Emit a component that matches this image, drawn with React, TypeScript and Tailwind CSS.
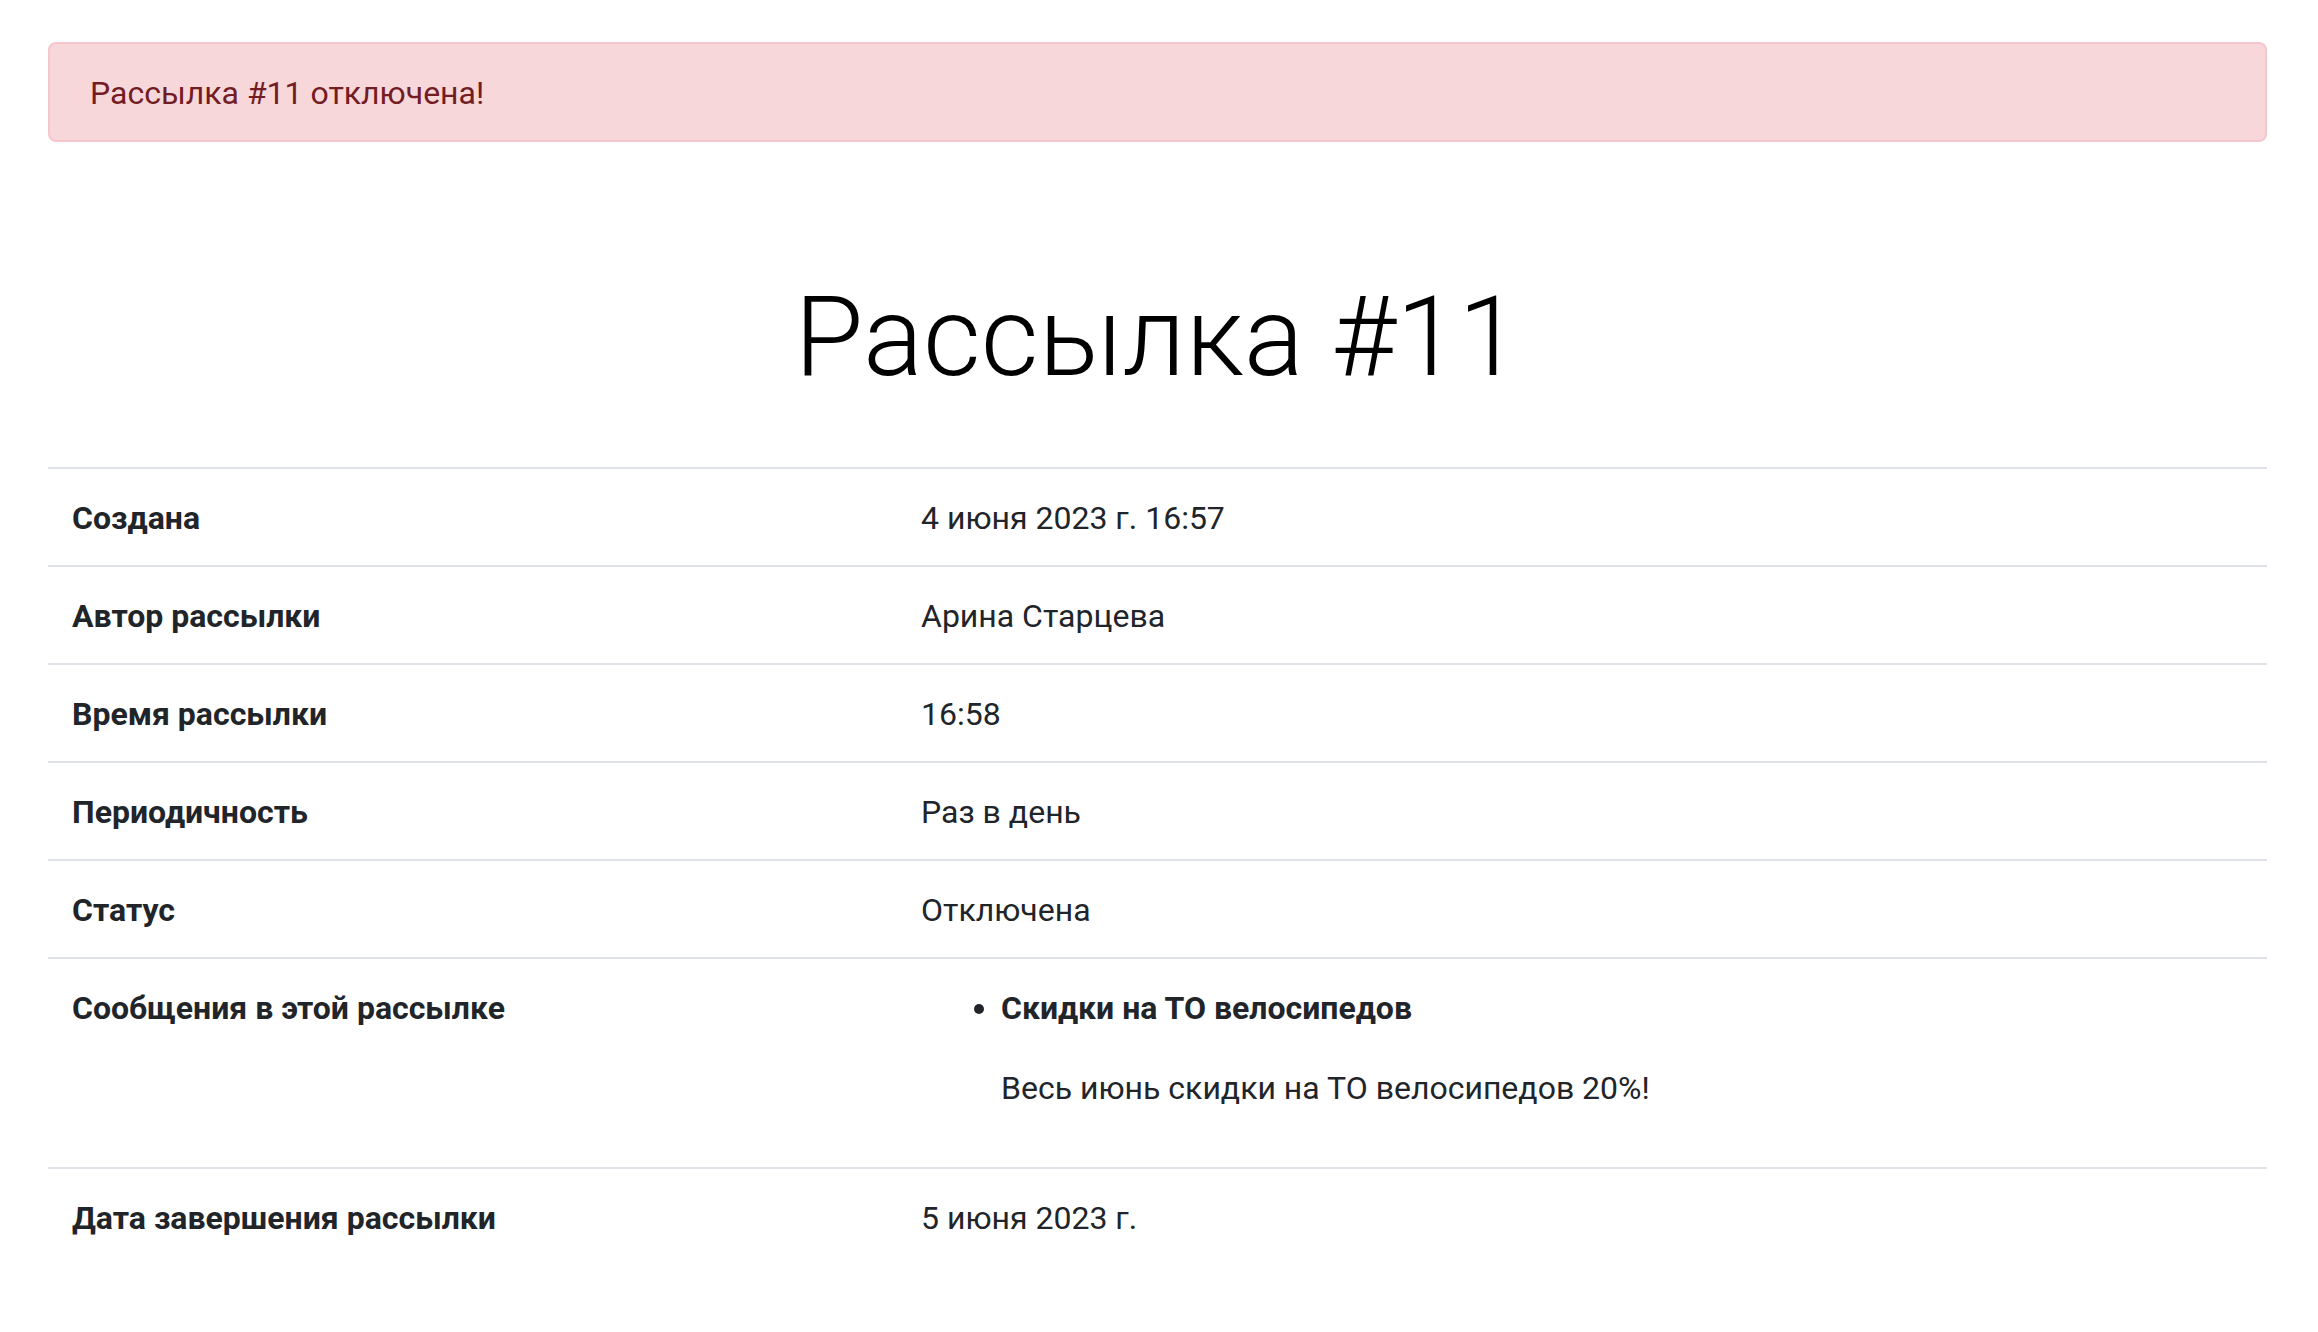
import React from "react";

const rows: { label: string; value: string }[] = [
  { label: "Создана", value: "4 июня 2023 г. 16:57" },
  { label: "Автор рассылки", value: "Арина Старцева" },
  { label: "Время рассылки", value: "16:58" },
  { label: "Периодичность", value: "Раз в день" },
  { label: "Статус", value: "Отключена" },
];

export default function App() {
  return (
    <div
      className="min-h-[1332px] bg-white text-[#212529] pl-[48px] pr-[51px] pt-[42px]"
      style={{ fontFamily: "Roboto, 'Noto Sans', sans-serif" }}
    >
      <div className="border-2 border-[#f5c6cb] bg-[#f8d7da] text-[#721c24] rounded-[8px] px-[40px] pt-[25px] pb-[23px] text-[32px] leading-[48px]">
        Рассылка #11 отключена!
      </div>

      <h1 className="mt-[128px] mb-[63px] text-center text-[112px] leading-[134px] font-light text-black">
        Рассылка #11
      </h1>

      <table className="w-full border-collapse text-[32px] leading-[48px]">
        <tbody>
          {rows.map((r) => (
            <tr key={r.label}>
              <th className="w-[849px] border-t-2 border-[#dee2e6] px-[24px] pt-[25px] pb-[23px] text-left font-bold align-top">
                {r.label}
              </th>
              <td className="border-t-2 border-[#dee2e6] px-[24px] pt-[25px] pb-[23px] align-top">{r.value}</td>
            </tr>
          ))}
          <tr>
            <th className="w-[849px] border-t-2 border-[#dee2e6] px-[24px] pt-[25px] pb-[23px] text-left font-bold align-top">
              Сообщения в этой рассылке
            </th>
            <td className="border-t-2 border-[#dee2e6] px-[24px] pt-[25px] pb-[23px] align-top">
              <ul className="list-disc pl-[80px] mb-[32px]">
                <li>
                  <p className="mb-[32px] font-bold">Скидки на ТО велосипедов</p>
                  <p className="mb-[32px]">Весь июнь скидки на ТО велосипедов 20%!</p>
                </li>
              </ul>
            </td>
          </tr>
          <tr>
            <th className="w-[849px] border-t-2 border-[#dee2e6] px-[24px] pt-[25px] pb-[23px] text-left font-bold align-top">
              Дата завершения рассылки
            </th>
            <td className="border-t-2 border-[#dee2e6] px-[24px] pt-[25px] pb-[23px] align-top">5 июня 2023 г.</td>
          </tr>
        </tbody>
      </table>
    </div>
  );
}
